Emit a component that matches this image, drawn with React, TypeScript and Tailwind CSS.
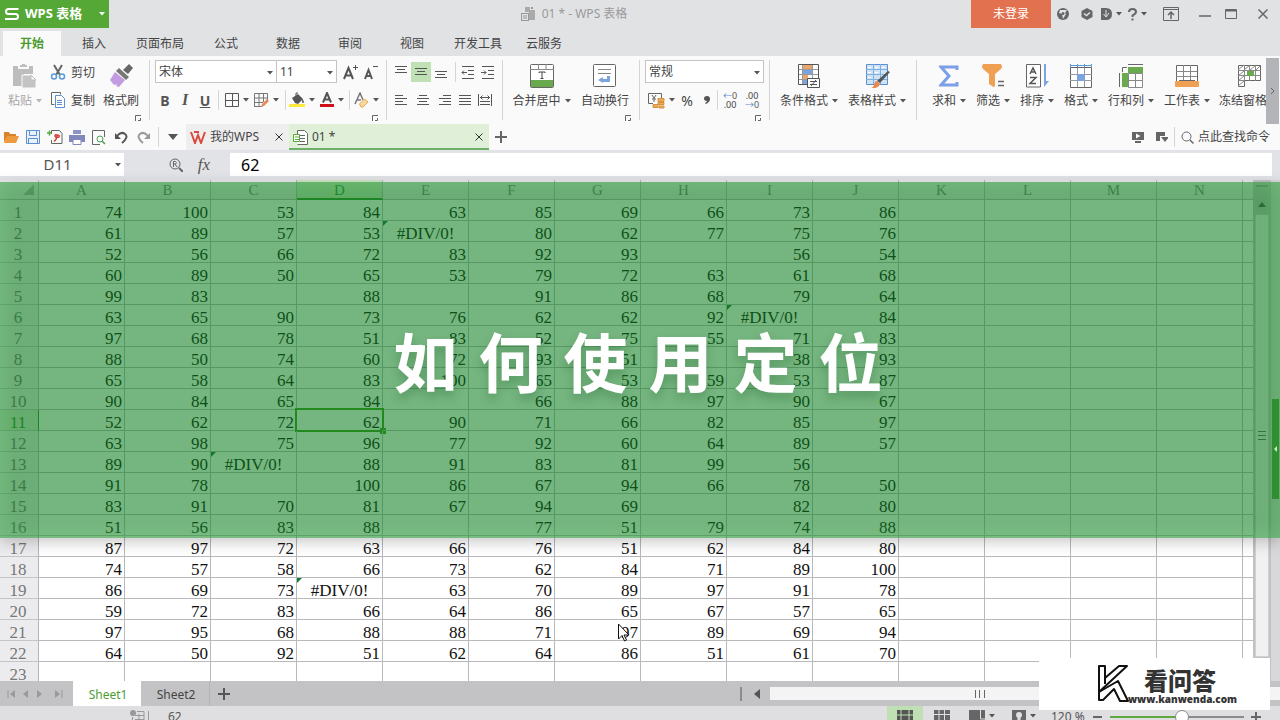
import React, { useState } from "react";
import clsx from "clsx";

const COLUMNS = "ABCDEFGHIJKLMN".split("");
const ERR = "#DIV/0!";

const DATA: (number | string)[][] = [
  [74, 100, 53, 84, 63, 85, 69, 66, 73, 86],
  [61, 89, 57, 53, ERR, 80, 62, 77, 75, 76],
  [52, 56, 66, 72, 83, 92, 93, "", 56, 54],
  [60, 89, 50, 65, 53, 79, 72, 63, 61, 68],
  [99, 83, "", 88, "", 91, 86, 68, 79, 64],
  [63, 65, 90, 73, 76, 62, 62, 92, ERR, 84],
  [97, 68, 78, 51, 83, 52, 75, 55, 71, 83],
  [88, 50, 74, 60, 72, 93, 51, "", 38, 93],
  [65, 58, 64, 83, 100, 65, 53, 59, 53, 87],
  [90, 84, 65, 84, "", 66, 88, 97, 90, 67],
  [52, 62, 72, 62, 90, 71, 66, 82, 85, 97],
  [63, 98, 75, 96, 77, 92, 60, 64, 89, 57],
  [89, 90, ERR, 88, 91, 83, 81, 99, 56, ""],
  [91, 78, "", 100, 86, 67, 94, 66, 78, 50],
  [83, 91, 70, 81, 67, 94, 69, "", 82, 80],
  [51, 56, 83, 88, "", 77, 51, 79, 74, 88],
  [87, 97, 72, 63, 66, 76, 51, 62, 84, 80],
  [74, 57, 58, 66, 73, 62, 84, 71, 89, 100],
  [86, 69, 73, ERR, 63, 70, 89, 97, 91, 78],
  [59, 72, 83, 66, 64, 86, 65, 67, 57, 65],
  [97, 95, 68, 88, 88, 71, 97, 89, 69, 94],
  [64, 50, 92, 51, 62, 64, 86, 51, 61, 70],
  []
];

const MENU = [
  { label: "插入", wide: false },
  { label: "页面布局", wide: true },
  { label: "公式", wide: false },
  { label: "数据", wide: false },
  { label: "审阅", wide: false },
  { label: "视图", wide: false },
  { label: "开发工具", wide: true },
  { label: "云服务", wide: false }
];

interface IcoProps {
  w?: number;
  h?: number;
  children: React.ReactNode;
}

const Ico: React.FC<IcoProps> = ({ w = 16, h = 16, children }) => (
  <svg width={w} height={h} viewBox={`0 0 ${w} ${h}`} fill="none" stroke="#666" className="shrink-0" aria-hidden="true">
    {children}
  </svg>
);

const Caret: React.FC<{ color?: string }> = ({ color = "#555" }) => (
  <svg width="6" height="4" viewBox="0 0 6 4" className="shrink-0" aria-hidden="true">
    <path d="M0 0h6L3 3.5z" fill={color} />
  </svg>
);

const Launcher: React.FC = () => (
  <button aria-label="更多设置" className="flex h-2 items-center">
    <Ico w={6} h={6}>
      <path d="M.5 6V.5H6M3 5.5h2.5V3" />
    </Ico>
  </button>
);

const Divider: React.FC = () => <div className="mt-1 h-15 w-px shrink-0 bg-[#d5d5d7]" />;
const MiniDivider: React.FC = () => <div className="h-5 w-px shrink-0 bg-[#d5d5d7]" />;

interface BigButtonProps {
  label: string;
  className: string;
  caret?: boolean;
  muted?: boolean;
  children: React.ReactNode;
}

const BigButton: React.FC<BigButtonProps> = ({ label, className, caret = true, muted, children }) => (
  <button className={clsx("flex shrink-0 flex-col items-center pt-2", className)}>
    <span className="flex h-6 items-center justify-center">{children}</span>
    <span className={clsx("mt-[3px] flex h-5 items-center gap-1 whitespace-nowrap", muted && "text-[#a8a8a8]")}>
      {label}
      {caret && <Caret color={muted ? "#b5b5b5" : "#555"} />}
    </span>
  </button>
);

interface ToolProps {
  label: string;
  className: string;
  caret?: boolean;
  children: React.ReactNode;
}

const Tool: React.FC<ToolProps> = ({ label, className, caret, children }) => (
  <button aria-label={label} className={clsx("flex h-5 shrink-0 items-center justify-center gap-1", className)}>
    {children}
    {caret && <Caret />}
  </button>
);

interface PickProps {
  label: string;
  value: string;
  className: string;
}

const Pick: React.FC<PickProps> = ({ label, value, className }) => (
  <div className={clsx("relative h-[23px] border border-[#c4c4c6] bg-white", className)}>
    <select aria-label={label} className="h-full w-full appearance-none bg-transparent pt-px pl-[3px] leading-5 outline-none">
      <option>{value}</option>
    </select>
    <span className="pointer-events-none absolute inset-y-0 right-[3px] flex items-center pt-0.5">
      <Caret />
    </span>
  </div>
);

const AlignIcon: React.FC<{ d: string }> = ({ d }) => (
  <Ico w={14} h={14}>
    <path d={d} stroke="#555" />
  </Ico>
);

const TitleBar: React.FC = () => (
  <header className="flex h-7 shrink-0 items-start text-[#777]">
    <button className="flex h-full w-[109px] items-center bg-[#55a835] pl-1 text-[13px] font-bold text-white">
      <Ico w={16} h={16}>
        <path d="M14.5 3H4.5Q2 3 2 5.500T4.5 8h7q2.5 0 2.5 2.500T11.5 13H1" stroke="#fff" strokeWidth="2" />
      </Ico>
      <span className="ml-[5px] whitespace-nowrap">WPS 表格</span>
      <span className="ml-auto flex h-full items-center px-1">
        <Caret color="#fff" />
      </span>
    </button>
    <div className="flex h-7 flex-1 items-center justify-center gap-[7px] pr-3 pl-20 text-[12px] text-[#999]">
      <Ico w={14} h={14}>
        <path d="M4 0h5v3h5v10H8V5H4z" fill="#aaa" stroke="none" />
        <rect x="0.5" y="6.5" width="7" height="7" fill="#e1e2e4" stroke="#999" />
        <path d="M2 9h4M2 11h4" stroke="#999" />
        <path d="M10 0h2v2h-2z" fill="#999" stroke="none" />
      </Ico>
      <span>01 * - WPS 表格</span>
    </div>
    <button className="h-7 w-20 bg-[#e27150] text-[12px] text-white">未登录</button>
    <div className="flex h-7 w-[229px] items-center">
      <Tool label="皮肤" className="w-6">
        <Ico w={12} h={12}>
          <circle cx="6" cy="6" r="6" fill="#666" stroke="none" />
          <path d="M3 2h7L8 5l1 1-3 5-1-5-3-1z" fill="#e1e2e4" stroke="none" />
          <circle cx="6" cy="5.5" r="1.5" fill="#666" stroke="none" />
        </Ico>
      </Tool>
      <Tool label="会员" className="w-6">
        <Ico w={12} h={12}>
          <path d="M6 0l5.5 3v6L6 12 .5 9V3z" fill="#666" stroke="none" />
          <path d="M3 5.5l2.5 2L9 4.5" stroke="#e1e2e4" strokeWidth="1.5" />
        </Ico>
      </Tool>
      <Tool label="稻壳" className="w-6" caret>
        <Ico w={11} h={12}>
          <path d="M0 0h5q6 0 6 6t-6 6H0z" fill="#666" stroke="none" />
          <path d="M5 2v7M2.5 6L5 9l3-4" stroke="#e1e2e4" />
        </Ico>
      </Tool>
      <Tool label="帮助" className="w-7" caret>
        <Ico w={9} h={13}>
          <path d="M1 4Q1 1 4.5 1T8 4Q8 5.5 4.5 7.500V9M4.5 10.500v2" strokeWidth="2" />
        </Ico>
      </Tool>
      <span className="mr-0.5 ml-1 h-3.5 w-px bg-[#999]" />
      <Tool label="隐藏功能区" className="w-7">
        <Ico w={16} h={14}>
          <path d="M.5 .5h15v13H.5zM0 2.5h16" />
          <path d="M8 12V5M5 8l3-3 3 3" strokeWidth="1.5" />
        </Ico>
      </Tool>
      <span className="mx-1 h-3.5 w-px bg-[#999]" />
      <Tool label="最小化" className="w-6">
        <Ico w={12} h={12}>
          <path d="M0 8h12" strokeWidth="1.5" />
        </Ico>
      </Tool>
      <Tool label="最大化" className="w-7">
        <Ico w={12} h={12}>
          <path d="M.5 1.5h11v9H.5z" />
          <path d="M1 2.5h10" strokeWidth="2" />
        </Ico>
      </Tool>
      <Tool label="关闭" className="w-9">
        <Ico w={10} h={10}>
          <path d="M.5 .5l9 9M9.5 .5l-9 9" strokeWidth="1.5" />
        </Ico>
      </Tool>
    </div>
  </header>
);

const Ribbon: React.FC = () => (
  <div className="flex h-17 shrink-0 overflow-hidden bg-[#fafafa] text-[12px] text-[#444]">
    {/* Clipboard */}
    <div className="flex w-[149px] shrink-0">
      <BigButton label="粘贴" className="w-[50px]" muted>
        <Ico w={26} h={26}>
          <path d="M1 3h5v3h11V3h4v8h-9v12H1z" fill="#bdbdbd" stroke="none" />
          <path d="M8 4V2h2V1h3v1h2v2z" fill="#bdbdbd" stroke="none" />
          <path d="M10 12h9l5 5v8H10z" fill="#c4c4c4" stroke="#fafafa" />
          <path d="M19 12v5h5z" fill="#fafafa" stroke="#bdbdbd" />
        </Ico>
      </BigButton>
      <div className="flex w-[50px] flex-col pt-1.5">
        <button className="flex h-5 items-center gap-1 whitespace-nowrap">
          <Ico w={16} h={16}>
            <path d="M4 1l6 10M12 1L6 11" strokeWidth="2" />
            <circle cx="4" cy="12.5" r="2.5" stroke="#5b9bd5" strokeWidth="1.5" />
            <circle cx="12" cy="12.5" r="2.5" stroke="#5b9bd5" strokeWidth="1.5" />
          </Ico>
          <span className="pt-px pl-px">剪切</span>
        </button>
        <button className="mt-2 flex h-5 items-center gap-1 whitespace-nowrap">
          <Ico w={16} h={16}>
            <path d="M4.5 12.500h-3V.5h9v2" />
            <path d="M5.5 3.500h6l3 3v9h-9z" fill="#fff" stroke="#5b8fd0" />
            <path d="M7 8.500h5M7 10.500h5M7 12.500h5" stroke="#5b8fd0" />
          </Ico>
          <span className="pt-px pl-px">复制</span>
        </button>
      </div>
      <div className="flex w-[49px] flex-col">
        <BigButton label="格式刷" className="w-[42px]" caret={false}>
          <Ico w={24} h={24}>
            <path d="M14 6l6-6 4 4-5 6z" fill="#666" stroke="none" />
            <path d="M10 4l10 9-3 3L7 7z" fill="#777" stroke="none" />
            <path d="M6 8l10 8-6 7-3-1 1-2-3 1-4-5z" fill="#c39be0" stroke="none" />
          </Ico>
        </BigButton>
        <div className="mt-[3px] self-end pr-2">
          <Launcher />
        </div>
      </div>
    </div>
    <Divider />

    {/* Font */}
    <div className="flex w-[236px] shrink-0 flex-col pt-1 pl-[5px]">
      <div className="flex items-center">
        <Pick label="字体" value="宋体" className="w-[122px]" />
        <Pick label="字号" value="11" className="-ml-px w-[61px]" />
        <Tool label="增大字号" className="ml-1 w-5">
          <Ico w={16} h={16}>
            <path d="M1 15L5.5 4l4.500 11M3 11.500h5" stroke="#555" strokeWidth="2" />
            <path d="M10 3.500h5M12.5 1v5" stroke="#555" />
          </Ico>
        </Tool>
        <Tool label="减小字号" className="w-5">
          <Ico w={16} h={16}>
            <path d="M2 15l3.500-9L9 15M4 12h3" stroke="#555" strokeWidth="2" />
            <path d="M10 2.500h5" stroke="#555" />
          </Ico>
        </Tool>
      </div>
      <div className="mt-[7px] flex items-center text-[14px] text-[#555]">
        <Tool label="加粗" className="w-5">
          <b>B</b>
        </Tool>
        <Tool label="倾斜" className="w-5">
          <i className="font-['Liberation_Serif',serif] text-[16px] font-bold">I</i>
        </Tool>
        <Tool label="下划线" className="w-5">
          <u className="font-bold">U</u>
        </Tool>
        <span className="mr-1 ml-[3px] flex">
          <MiniDivider />
        </span>
        <Tool label="边框" className="w-7" caret>
          <Ico w={14} h={14}>
            <path d="M.5 .5h13v13H.5zM7.5 0v14M0 7.500h14" stroke="#555" />
          </Ico>
        </Tool>
        <Tool label="绘图边框" className="w-[31px]" caret>
          <Ico w={15} h={15}>
            <path d="M.5 13.500V.5h13V8M5 0v14M9.5 0v9M0 5h14M0 9.500h9M0 13.500h8" stroke="#777" />
            <path d="M7 14l1-3 5-5 2 2-5 5z" fill="#e58a5c" stroke="none" />
          </Ico>
        </Tool>
        <span className="mr-0.5 ml-[3px] flex">
          <MiniDivider />
        </span>
        <Tool label="填充颜色" className="w-7" caret>
          <Ico w={16} h={16}>
            <path d="M3 6l6-4 5 5-5 5-3-1z" fill="#555" stroke="none" />
            <path d="M7 4V1h2" stroke="#555" />
            <path d="M13 7q2 2 1 4z" fill="#555" />
            <path d="M0 12h16v3H0z" fill="#ffe93b" stroke="none" />
          </Ico>
        </Tool>
        <Tool label="字体颜色" className="w-[31px]" caret>
          <Ico w={14} h={16}>
            <path d="M3 10.500L7 1l4 9.500M4.5 7.500h5" stroke="#555" strokeWidth="2" />
            <path d="M0 12h14v3H0z" fill="#d0111b" stroke="none" />
          </Ico>
        </Tool>
        <span className="mr-1 ml-0.5 flex">
          <MiniDivider />
        </span>
        <Tool label="清除格式" className="w-6" caret>
          <Ico w={15} h={16}>
            <path d="M1 12L6 1l3 7M3 8h4" stroke="#777" strokeWidth="1.5" />
            <path d="M5.5 12l5-5 3.500 3-5 5h-2z" fill="#f7d9a4" stroke="#e6a84d" />
          </Ico>
        </Tool>
      </div>
      <div className="mt-1 self-end pr-2">
        <Launcher />
      </div>
    </div>
    <Divider />

    {/* Alignment */}
    <div className="flex w-[115px] shrink-0 flex-col pt-1.5 pl-1">
      <div className="flex items-center">
        <Tool label="顶端对齐" className="w-5">
          <AlignIcon d="M1 1.500h12M3 4.500h8M1 7.500h12" />
        </Tool>
        <Tool label="垂直居中" className="w-5 bg-[#c0e0b6]">
          <AlignIcon d="M1 3.500h12M3 6.500h8M1 9.500h12" />
        </Tool>
        <Tool label="底端对齐" className="w-5">
          <AlignIcon d="M1 6.500h12M3 9.500h8M1 12.500h12" />
        </Tool>
        <span className="ml-1 flex">
          <MiniDivider />
        </span>
        <Tool label="减少缩进" className="ml-0.5 w-5">
          <AlignIcon d="M1 1.500h12M7 5.500h6M7 9.500h6M1 13.500h12M6 7.500H1M3 5.500l-2 2 2 2" />
        </Tool>
        <Tool label="增加缩进" className="w-5">
          <AlignIcon d="M1 1.500h12M7 5.500h6M7 9.500h6M1 13.500h12M0 7.500h5M3 5.500l2 2-2 2" />
        </Tool>
      </div>
      <div className="mt-2 flex items-center">
        <Tool label="左对齐" className="w-5">
          <AlignIcon d="M1 2.500h8M1 5.500h12M1 8.500h8M1 11.500h12" />
        </Tool>
        <Tool label="居中" className="w-6">
          <AlignIcon d="M3 2.500h8M1 5.500h12M3 8.500h8M1 11.500h12" />
        </Tool>
        <Tool label="右对齐" className="w-5">
          <AlignIcon d="M5 2.500h8M1 5.500h12M5 8.500h8M1 11.500h12" />
        </Tool>
        <Tool label="两端对齐" className="w-5">
          <AlignIcon d="M1 2.500h12M1 5.500h12M1 8.500h12M1 11.500h12" />
        </Tool>
        <Tool label="分散对齐" className="w-5">
          <AlignIcon d="M.5 1v12M13.5 1v12M2 4.500h10M4.5 2.500l-2 2 2 2M9.5 2.500l2 2-2 2M2 8.500h10M2 11.500h10" />
        </Tool>
      </div>
    </div>
    <Divider />
    <div className="flex w-[136px] shrink-0">
      <BigButton label="合并居中" className="w-[77px]">
        <Ico w={24} h={24}>
          <rect x="0.5" y="0.5" width="23" height="23" rx="1" fill="#fff" />
          <path d="M0 5.500h24M8.5 0v5M16 0v5" stroke="#888" />
          <path d="M9 9V8h6v1M12 8v6M10.5 14.500h3" stroke="#444" />
          <path d="M1 16h22v7H1z" fill="#69aa4e" stroke="none" />
        </Ico>
      </BigButton>
      <div className="flex w-[59px] flex-col">
        <BigButton label="自动换行" className="w-[50px]" caret={false}>
          <Ico w={24} h={24}>
            <rect x="0.5" y="0.5" width="22" height="22" rx="1" fill="#fff" />
            <path d="M5 5.500h13M5 9.500h13" stroke="#888" />
            <path d="M15.5 12v4.500H9" stroke="#7ba4de" strokeWidth="3" />
            <path d="M10 13v6l-5-3z" fill="#7ba4de" stroke="none" />
          </Ico>
        </BigButton>
        <div className="mt-[3px] self-end pr-2">
          <Launcher />
        </div>
      </div>
    </div>
    <Divider />

    {/* Number format */}
    <div className="flex w-[129px] shrink-0 flex-col pt-1 pl-[5px]">
      <Pick label="数字格式" value="常规" className="w-[119px]" />
      <div className="mt-[7px] flex items-center">
        <Tool label="会计格式" className="w-8" caret>
          <Ico w={17} h={17}>
            <path d="M5 11.500H.5V1.500h13V6" />
            <path d="M4 3l2 3 2-3M6 6v4M4 7h4" />
            <path d="M10 6.500h6v3h-6zM10 10.500h6v2h-6zM5 12.500h5v3H5zM11 14h5v2h-5z" fill="#e9ac5e" stroke="#d8923c" />
          </Ico>
        </Tool>
        <Tool label="百分比" className="w-5 text-[14px]">
          %
        </Tool>
        <Tool label="千位分隔" className="w-5">
          <Ico w={6} h={8}>
            <path d="M3 0q3 0 3 3T2 8l-1-1q2-1 2-2Q0 5 0 2.500T3 0z" fill="#555" stroke="none" />
          </Ico>
        </Tool>
        <MiniDivider />
        <button className="flex h-5 w-6 flex-col items-center justify-center text-[9px] leading-[9px]">
          <span className="text-[#5b8fd0]">
            ←<span className="text-[#555]">0</span>
          </span>
          <span>.00</span>
        </button>
        <button className="flex h-5 w-5 flex-col items-center justify-center text-[9px] leading-[9px]">
          <span>.00</span>
          <span className="text-[#5b8fd0]">
            →<span className="text-[#555]">0</span>
          </span>
        </button>
      </div>
      <div className="mt-1 self-end pr-2">
        <Launcher />
      </div>
    </div>
    <Divider />

    {/* Styles */}
    <div className="flex w-[146px] shrink-0 pl-1.5">
      <BigButton label="条件格式" className="w-[66px]">
        <Ico w={24} h={25}>
          <path d="M1.5 .5h20v20h-20z" fill="#fff" stroke="none" />
          <path d="M6 1h9v4H6zM6 11h5v5H6z" fill="#e8a56c" stroke="none" />
          <path d="M6 6h9v5H6z" fill="#7ba4de" stroke="none" />
          <path d="M6 16h5v4H6z" fill="#7ba4de" stroke="none" />
          <path d="M5.5 0v20M15.5 0v14M1 5.500h20M1 10.500h20M1 15.500h9" stroke="#999" />
          <path d="M1.5 .5h20v20h-20z" stroke="#555" />
          <path d="M10.5 14.500h12v9h-12z" fill="#fff" stroke="#555" />
          <path d="M13 17.500h7M13 20.500h7M19 16l-5 6" stroke="#555" />
        </Ico>
      </BigButton>
      <BigButton label="表格样式" className="w-[70px]">
        <Ico w={25} h={24}>
          <path d="M1.5 .5h21v20h-21z" fill="#cfe3f7" stroke="#5b8fd0" />
          <path d="M8.5 0v20M15.5 0v20M1 5.500h21M1 10.500h21M1 15.500h21" stroke="#7fb0e0" />
          <path d="M3 3.500h3M10 3.500h3M17 3.500h3M3 8.500h3M10 8.500h3M3 13.500h3" stroke="#fff" />
          <path d="M25 8L15 19l-3-2L23 7z" fill="#555" stroke="none" />
          <path d="M12 17l3 3q-2 5-9 4 3-1 3-4 1-3 3-3z" fill="#e58a4c" stroke="none" />
        </Ico>
      </BigButton>
    </div>
    <Divider />

    {/* Editing */}
    <div className="flex flex-1 overflow-hidden pl-2.5">
      <BigButton label="求和" className="w-11">
        <Ico w={20} h={22}>
          <path d="M18 5V2H2l8 9-8 9h16v-3" stroke="#7b9fe8" strokeWidth="3" />
        </Ico>
      </BigButton>
      <BigButton label="筛选" className="w-11">
        <Ico w={24} h={24}>
          <path d="M3 0h16q2 0 2 3l-1 2-6 5v12q-1 2-3 0l-3-2V10L2 5 1 3q0-3 2-3z" fill="#efa052" stroke="none" />
          <path d="M17 17.500h6M17 21.500h6" strokeWidth="1.5" />
        </Ico>
      </BigButton>
      <BigButton label="排序" className="w-11">
        <Ico w={24} h={24}>
          <path d="M1.5 .5h14v22.500h-14z" fill="#fff" />
          <path d="M5 10l3-6 3 6M6 8h4M5 13.500h6l-6 6h6" stroke="#555" strokeWidth="1.5" />
          <path d="M20 0v20" stroke="#7ba4de" strokeWidth="2" />
          <path d="M19 17h5l-5 6z" fill="#7ba4de" stroke="none" />
        </Ico>
      </BigButton>
      <BigButton label="格式" className="w-11">
        <Ico w={24} h={24}>
          <path d="M1 1.500h22M1.5 0v3M22.5 0v3M8.5 0v3M15.5 0v3" stroke="#5b9bd5" />
          <path d="M1.5 3.500h21v20h-21z" fill="#fff" />
          <path d="M8.5 4v19M15.5 4v19M1 10.500h22M1 16.500h22" stroke="#999" />
          <path d="M8 10h8v7H8z" fill="#7ba4de" stroke="none" />
        </Ico>
      </BigButton>
      <BigButton label="行和列" className="w-14">
        <Ico w={25} h={24}>
          <path d="M9.5 9.500h14v14h-14zM16.5 9v14M9 16.500h15" stroke="#888" fill="#fff" />
          <path d="M9 3h15v6H9zM3 9h6v14H3z" fill="#69aa4e" stroke="none" />
          <path d="M3.5 8V3.500H8M9 .5h15M.5 9v14" />
        </Ico>
      </BigButton>
      <BigButton label="工作表" className="w-14">
        <Ico w={26} h={24}>
          <path d="M2.5 1.500h21V18h-21z" fill="#fff" />
          <path d="M9.5 1v17M16.5 1v17M2 7.500h21M2 12.500h21" stroke="#888" />
          <rect x="1" y="17" width="24" height="6" rx="1" fill="#efa052" stroke="none" />
          <path d="M5 16.500h16" />
        </Ico>
      </BigButton>
      <button className="flex flex-1 flex-col items-start overflow-hidden pt-2 pl-1">
        <span className="flex h-6 items-center pl-[18px]">
          <Ico w={26} h={24}>
            <path d="M1.5 22.500V1.500h22v15h-16v6z" fill="#fff" />
            <path d="M7.5 1v16M12.5 1v16M18.5 1v16M1 6.500h23M1 11.500h23M1 16.500h7" stroke="#888" />
            <path d="M1 6l6-5M7 6l6-5M13 6l6-5M19 6l5-5M1 12l6-5M1 17l6-5M1 22l6-5" stroke="#888" />
            <path d="M10 7h7v5h-7z" fill="#69aa4e" stroke="none" />
          </Ico>
        </span>
        <span className="mt-[3px] h-5 leading-5 whitespace-nowrap">冻结窗格</span>
      </button>
    </div>
    <button aria-label="向右滚动" className="mt-0.5 mr-px flex w-[13px] shrink-0 items-center justify-center bg-[#b2b4b8]">
      <Ico w={5} h={8}>
        <path d="M1 1l3 3-3 3" />
      </Ico>
    </button>
  </div>
);

const DocumentBar: React.FC = () => (
  <div className="flex h-[26px] shrink-0 items-center bg-[#fafafa] pl-px text-[12px] text-[#444]">
    <Tool label="打开" className="w-5">
      <Ico w={16} h={14}>
        <path d="M1 12V2h5l1 2h6v2H5z" fill="#d9822b" stroke="none" />
        <path d="M4 6h12l-3 7H1z" fill="#ee9a3f" stroke="none" />
      </Ico>
    </Tool>
    <Tool label="保存" className="w-6">
      <Ico w={14} h={14}>
        <path d="M.5 .5h13v13H.5z" fill="#e8f1fc" stroke="#5b8fd0" />
        <path d="M3.5 1v4.500h7V1M2.5 13V8.500h9V13" stroke="#5b8fd0" />
      </Ico>
    </Tool>
    <Tool label="输出为PDF" className="w-5">
      <Ico w={16} h={16}>
        <path d="M4.5 5V1.500h8l2.500 3v10H4.500V11" />
        <path d="M7 12.500q3-2 3-6.500-2-1-2 1t4 1q1-2-2-2" stroke="#d9413a" strokeWidth="1.5" />
        <path d="M0 4h5M2.5 1.500v5" stroke="#5aa63c" strokeWidth="1.5" />
      </Ico>
    </Tool>
    <Tool label="打印" className="w-6">
      <Ico w={16} h={15}>
        <path d="M4 0h8v4H4z" fill="#8d93c6" stroke="none" />
        <path d="M0 5h16v7H0z" fill="#8287bd" stroke="none" />
        <path d="M4 9.500h8v5H4z" fill="#fff" stroke="#8287bd" />
      </Ico>
    </Tool>
    <Tool label="打印预览" className="w-5">
      <Ico w={14} h={15}>
        <path d="M8 14.500H.5V.5h12V7" />
        <circle cx="8" cy="9" r="3" stroke="#4f9f50" />
        <path d="M10 11l3 3" stroke="#4f9f50" strokeWidth="1.5" />
      </Ico>
    </Tool>
    <Tool label="撤销" className="w-6">
      <Ico w={13} h={13}>
        <path d="M2 5q4-5 8-2t-3 9" stroke="#555" strokeWidth="2" />
        <path d="M0 2v6h6z" fill="#555" stroke="none" />
      </Ico>
    </Tool>
    <Tool label="恢复" className="w-5">
      <Ico w={13} h={13}>
        <path d="M11 5Q7 0 3 3t3 9" stroke="#999" strokeWidth="2" />
        <path d="M13 2v6H7z" fill="#999" stroke="none" />
      </Ico>
    </Tool>
    <span className="ml-[5px] flex">
      <MiniDivider />
    </span>
    <Tool label="自定义工具栏" className="w-[27px]">
      <Ico w={10} h={6}>
        <path d="M0 0h10L5 6z" fill="#555" stroke="none" />
      </Ico>
    </Tool>
    <div className="flex h-full w-[103px] items-center bg-[#eeeeef] pl-1 whitespace-nowrap">
      <button className="flex flex-1 items-center gap-1">
        <Ico w={16} h={13}>
          <path d="M1 1l4 11 3-8 3 8 4-11M4 1h5" stroke="#dc4a3d" strokeWidth="2" />
        </Ico>
        我的WPS
      </button>
      <Tool label="关闭我的WPS" className="w-5">
        <Ico w={8} h={8}>
          <path d="M.5 .5l7 7M7.5 .5l-7 7" stroke="#333" />
        </Ico>
      </Tool>
    </div>
    <div className="flex h-full w-[200px] items-center border-b-2 border-[#6db068] bg-[#e0efd8] pt-0.5 pl-1">
      <button className="flex flex-1 items-center gap-1">
        <Ico w={15} h={15}>
          <path d="M4.5 4V.5h7l3 3v11h-10" fill="#fff" />
          <path d="M7 5.500h5M7 8.500h5M7 11.500h5" />
          <path d="M.5 4.500h6v7h-6z" fill="#fff" stroke="#5aa63c" />
          <path d="M2 7h4M2 9.500h4" stroke="#5aa63c" />
        </Ico>
        01 *
      </button>
      <Tool label="关闭 01" className="w-5">
        <Ico w={8} h={8}>
          <path d="M.5 .5l7 7M7.5 .5l-7 7" stroke="#333" />
        </Ico>
      </Tool>
    </div>
    <Tool label="新建" className="w-6">
      <Ico w={12} h={12}>
        <path d="M0 6h12M6 0v12" strokeWidth="2" />
      </Ico>
    </Tool>
    <div className="ml-auto flex items-center pr-2.5">
      <Tool label="演示" className="w-6">
        <Ico w={12} h={12}>
          <path d="M0 1h12v8H0zM3 10h6v2H3z" fill="#666" stroke="none" />
          <path d="M4 2.500v5L8.5 5z" fill="#fff" stroke="none" />
        </Ico>
      </Tool>
      <Tool label="窗口切换" className="w-6">
        <Ico w={12} h={12}>
          <path d="M0 1h9v4H4v5H0zM5 6h8L9 11z" fill="#666" stroke="none" />
        </Ico>
      </Tool>
      <MiniDivider />
      <button className="flex items-center gap-1 pl-1.5 whitespace-nowrap">
        <Ico w={13} h={13}>
          <circle cx="5.5" cy="5.5" r="4.5" />
          <path d="M9 9l3.500 3.500" strokeWidth="1.5" />
        </Ico>
        点此查找命令
      </button>
    </div>
  </div>
);

const FormulaBar: React.FC = () => {
  const [value, setValue] = useState("62");
  return (
    <div className="flex h-[30px] shrink-0 items-start bg-[#e2e3e6] pt-[3px] pr-2">
      <div className="flex h-[23px] w-[124px] items-center bg-white pr-[3px]">
        <input aria-label="名称框" defaultValue="D11" className="min-w-0 flex-1 text-center text-[15px] text-[#555] outline-none" />
        <Caret />
      </div>
      <div className="flex h-[23px] w-[106px] items-center justify-end pr-3">
        <Tool label="查找" className="w-6">
          <Ico w={14} h={14}>
            <circle cx="6" cy="6" r="5" />
            <path d="M10 10l4 4" strokeWidth="2" />
            <path d="M4.5 9V3.500h2q2 1 0 2.500h-2M6 6l2 3" />
          </Ico>
        </Tool>
        <button aria-label="插入函数" className="ml-0.5 w-7 font-['Liberation_Serif',serif] text-[17px] text-[#555] italic">
          fx
        </button>
      </div>
      <input
        aria-label="编辑栏"
        value={value}
        onChange={(e) => setValue(e.target.value)}
        className="h-[23px] min-w-0 flex-1 bg-white pl-[11px] text-[16px] leading-5 text-black outline-none"
      />
    </div>
  );
};

const Grid: React.FC = () => (
  <div className="min-w-0 flex-1 overflow-hidden bg-white">
    <table className="w-full table-fixed border-separate border-spacing-0 font-['Liberation_Serif','Noto_Sans_CJK_SC',serif] text-[17px] leading-4">
      <colgroup>
        <col className="w-[39px]" />
        {COLUMNS.map((c) => (
          <col key={c} className="w-[86px]" />
        ))}
        <col />
      </colgroup>
      <thead>
        <tr className="h-5 text-[#777]">
          <th className="h-5 border-r border-b border-[#b4b4b6] bg-[#e8e8ea] p-0">
            <svg width="11" height="11" viewBox="0 0 11 11" className="mr-1 ml-auto" aria-hidden="true">
              <path d="M11 0v11H0z" fill="#a9a9ab" />
            </svg>
          </th>
          {COLUMNS.map((c) => (
            <th
              key={c}
              className={clsx(
                "h-5 border-r border-r-[#b4b4b6] p-0 text-[15px] font-normal",
                c === "D" ? "border-b-2 border-b-[#2f8f2b] bg-[#cde8c4] pt-0.5 text-[#2f8f2b]" : "border-b border-b-[#b4b4b6] bg-[#e8e8ea] pt-px"
              )}
            >
              {c}
            </th>
          ))}
          <th className="border-b border-[#b4b4b6] bg-[#e8e8ea] p-0" />
        </tr>
      </thead>
      <tbody>
        {DATA.map((row, r) => (
          <tr key={r} className="h-[21px]">
            <th
              className={clsx(
                "h-[21px] border-r border-b border-b-[#c4c4c6] p-0 pt-[5px] pr-0.5 text-center leading-[15px] font-normal",
                r === 10 ? "border-r-[#2f8f2b] bg-[#dcebd8] text-[#2f8f2b]" : "border-r-[#b4b4b6] bg-[#ececee] text-[#777]"
              )}
            >
              {r + 1}
            </th>
            {COLUMNS.map((c, i) => {
              const value = row[i] ?? "";
              const active = r === 10 && c === "D";
              return (
                <td
                  key={c}
                  className={clsx(
                    "relative h-[21px] border-r border-b border-[#b9b9bb] p-0 pt-[5px] leading-[15px] text-[#111]",
                    value === ERR ? "text-center" : "pr-0.5 text-right"
                  )}
                >
                  {value}
                  {value === ERR && (
                    <svg width="5" height="5" viewBox="0 0 5 5" className="absolute top-0 left-0" aria-hidden="true">
                      <path d="M0 0h5L0 5z" fill="#157a38" />
                    </svg>
                  )}
                  {active && (
                    <span className="absolute -inset-0.5 border-2 border-[#3f9a20]">
                      <span className="absolute -right-1 -bottom-1 size-1.5 bg-[#3f9a20]" />
                    </span>
                  )}
                </td>
              );
            })}
            <td className="border-b border-[#b9b9bb] p-0" />
          </tr>
        ))}
      </tbody>
    </table>
  </div>
);

const VerticalScroll: React.FC = () => (
  <div className="flex w-[18px] shrink-0 flex-col items-center bg-[#c2c2c4] px-0.5 pb-6">
    <span className="mt-[5px] h-0.5 w-3 bg-[#999]" />
    <button aria-label="向上滚动" className="mt-[7px] flex h-5 items-center justify-center">
      <Ico w={8} h={5}>
        <path d="M0 5h8L4 0z" fill="#555" stroke="none" />
      </Ico>
    </button>
    <div className="flex w-full flex-1 items-center justify-center border border-[#d0d0d2] bg-[#f1f1f2]">
      <Ico w={8} h={9}>
        <path d="M0 .5h8M0 4.500h8M0 8.500h8" />
      </Ico>
    </div>
  </div>
);

const SheetBar: React.FC = () => (
  <div className="flex h-[25px] shrink-0 items-center bg-[#c3c3c5] text-[12px] text-[#444]">
    <div className="flex w-[73px] items-center gap-2 pl-[7px]">
      <button aria-label="第一张">
        <Ico w={8} h={8}>
          <path d="M1 0v8" stroke="#999" />
          <path d="M8 0v8L3 4z" fill="#999" stroke="none" />
        </Ico>
      </button>
      <button aria-label="上一张">
        <Ico w={6} h={8}>
          <path d="M5 0v8L0 4z" fill="#999" stroke="none" />
        </Ico>
      </button>
      <button aria-label="下一张">
        <Ico w={6} h={8}>
          <path d="M0 0v8l5-4z" fill="#999" stroke="none" />
        </Ico>
      </button>
      <button aria-label="最后一张" className="pl-1">
        <Ico w={8} h={8}>
          <path d="M7 0v8" stroke="#999" />
          <path d="M0 0v8l5-4z" fill="#999" stroke="none" />
        </Ico>
      </button>
    </div>
    <button className="h-full w-[68px] bg-white pt-0.5 pl-0.5 text-[#4d9c34]">Sheet1</button>
    <button className="h-full w-[69px] border-r border-[#b4b4b6] pt-0.5 pl-0.5">Sheet2</button>
    <Tool label="新建工作表" className="ml-0.5 w-6">
      <Ico w={12} h={12}>
        <path d="M0 6h12M6 0v12" stroke="#555" strokeWidth="2" />
      </Ico>
    </Tool>
    <div className="ml-auto flex w-[540px] items-center">
      <span className="h-3.5 w-0.5 bg-[#8c8c8e]" />
      <button aria-label="向左滚动" className="ml-3 w-4">
        <Ico w={6} h={10}>
          <path d="M6 0v10L0 5z" fill="#555" stroke="none" />
        </Ico>
      </button>
      <div className="flex h-[13px] flex-1 items-center bg-[#f4f4f4] pl-[205px]">
        <Ico w={10} h={8}>
          <path d="M.5 0v8M4.5 0v8M9.5 0v8" />
        </Ico>
      </div>
    </div>
  </div>
);

const StatusBar: React.FC = () => {
  const [zoom, setZoom] = useState(54);
  return (
    <footer className="flex h-3.5 shrink-0 items-start overflow-hidden bg-[#dfdfe2] text-[12px] leading-[22px] text-[#555]">
      <span className="mt-1 ml-[130px]">
        <Ico w={20} h={14}>
          <circle cx="3" cy="3" r="3" fill="#999" stroke="none" />
          <path d="M7 1.500h7v12H2.5V7M5 5.500h9M5 9.500h9M9 4v9" stroke="#999" />
          <path d="M18.5 1v12" stroke="#999" />
        </Ico>
      </span>
      <span className="ml-[18px]">62</span>
      <div className="ml-auto flex items-start">
        <button aria-label="普通视图" className="flex h-5 w-[36px] items-center justify-center bg-[#bfe0b5]">
          <Ico w={16} h={14}>
            <path d="M0 1h16v13H0z" fill="#555" stroke="none" />
            <path d="M0 6h16M4 1v13M12 1v13" stroke="#bfe0b5" />
          </Ico>
        </button>
        <button aria-label="分页预览" className="flex h-5 w-[38px] items-center justify-center">
          <Ico w={16} h={14}>
            <path d="M0 1h16v13H0z" fill="#666" stroke="none" />
            <path d="M0 5.500h16M5 1v13M10.5 1v13" stroke="#dfdfe2" />
          </Ico>
        </button>
        <Tool label="页面布局视图" className="w-[42px]" caret>
          <Ico w={16} h={14}>
            <path d="M0 1h16v13H0z" fill="#666" stroke="none" />
            <path d="M11.5 1v9H16" stroke="#dfdfe2" />
          </Ico>
        </Tool>
        <Tool label="阅读模式" className="w-[42px]" caret>
          <Ico w={14} h={14}>
            <path d="M0 1h14v13H0z" fill="#666" stroke="none" />
            <circle cx="7" cy="6" r="3" fill="#dfdfe2" stroke="none" />
            <path d="M5.5 8h3v3h-3z" fill="#dfdfe2" stroke="none" />
          </Ico>
        </Tool>
        <span className="ml-1.5 w-[41px] text-[12px] whitespace-nowrap">120 %</span>
        <button aria-label="缩小" className="mt-1">
          <Ico w={12} h={14}>
            <path d="M1 7h9" strokeWidth="2" />
          </Ico>
        </button>
        <input
          type="range"
          aria-label="缩放"
          value={zoom}
          onChange={(e) => setZoom(Number(e.target.value))}
          className="mx-1.5 mt-1 h-3.5 w-[134px] appearance-none bg-[linear-gradient(to_right,#62a840_54%,#8a8a8c_54%)] bg-[length:100%_2px] bg-center bg-no-repeat [&::-webkit-slider-thumb]:size-3.5 [&::-webkit-slider-thumb]:appearance-none [&::-webkit-slider-thumb]:rounded-full [&::-webkit-slider-thumb]:border [&::-webkit-slider-thumb]:border-[#888] [&::-webkit-slider-thumb]:bg-white"
        />
        <button aria-label="放大" className="mt-1 mr-[18px]">
          <Ico w={12} h={14}>
            <path d="M1 7h10M6 2v10" strokeWidth="2" />
          </Ico>
        </button>
      </div>
    </footer>
  );
};

const Banner: React.FC = () => (
  <div className="absolute inset-x-0 top-0.5 flex h-[356px] items-center justify-center bg-[rgba(12,125,30,0.57)] shadow-[0_4px_14px_rgba(0,0,0,0.22),inset_0_0_20px_rgba(140,230,150,0.35)]">
    <h1 className="flex gap-[21px] pt-1.5 pr-1 text-[64px] leading-none font-bold text-white [text-shadow:0_6px_10px_rgba(0,70,20,0.25)]">
      {"如何使用定位".split("").map((ch) => (
        <span key={ch}>{ch}</span>
      ))}
    </h1>
  </div>
);

const Watermark: React.FC = () => (
  <div className="absolute right-2.5 bottom-2.5 flex h-[52px] w-[231px] items-center bg-white pl-14 text-[#333]">
    <svg width="36" height="42" viewBox="0 0 36 42" className="shrink-0" fill="none" stroke="#111" strokeWidth="2" strokeLinejoin="round" aria-hidden="true">
      <path d="M4 3h6v12L24 3h8L4 29z" />
      <path d="M4 29v8h4l11-11 6 12h8L23 18z" />
      <path d="M10 15v6" />
    </svg>
    <div className="-ml-[3px] flex flex-col pt-1">
      <span className="pl-4 text-[24px] leading-[25px] font-black">看问答</span>
      <span className="font-['Open_Sans',sans-serif] text-[10px] leading-3 font-extrabold">www.kanwenda.com</span>
    </div>
  </div>
);

export default function App() {
  return (
    <div className="relative flex h-screen flex-col overflow-hidden bg-[#e1e2e4] font-['Noto_Sans','Noto_Sans_CJK_SC',sans-serif] text-[12px]">
      <TitleBar />
      <nav className="flex h-7 shrink-0 items-end text-[12px] text-[#444]">
        <button className="mr-0.5 ml-[3px] h-[25px] w-[58px] bg-[#fafafa] pt-px font-bold text-[#4a9a2e]">开始</button>
        {MENU.map((m) => (
          <button key={m.label} className={clsx("h-[25px] pt-px", m.wide ? "w-[70px]" : "w-[62px]")}>
            {m.label}
          </button>
        ))}
      </nav>
      <Ribbon />
      <DocumentBar />
      <FormulaBar />
      <main className="relative flex min-h-0 flex-1">
        <Grid />
        <VerticalScroll />
        <div className="w-[9px] shrink-0 bg-[#d8d8db]" />
        <Banner />
        <button aria-label="展开侧栏" className="absolute top-[219px] right-px flex h-[100px] w-[7px] items-center justify-center bg-[#2f9030]">
          <Ico w={3} h={6}>
            <path d="M3 0v6L0 3z" fill="#cfe8cf" stroke="none" />
          </Ico>
        </button>
        {/* Mouse pointer */}
        <svg width="12" height="19" viewBox="0 0 12 19" className="absolute top-[443px] left-[618px]" aria-hidden="true">
          <path d="M.5 1v15l3.500-3.500 2.500 5.500 2-1L6 12h5z" fill="#fff" stroke="#111" />
        </svg>
      </main>
      <SheetBar />
      <StatusBar />
      <Watermark />
    </div>
  );
}
